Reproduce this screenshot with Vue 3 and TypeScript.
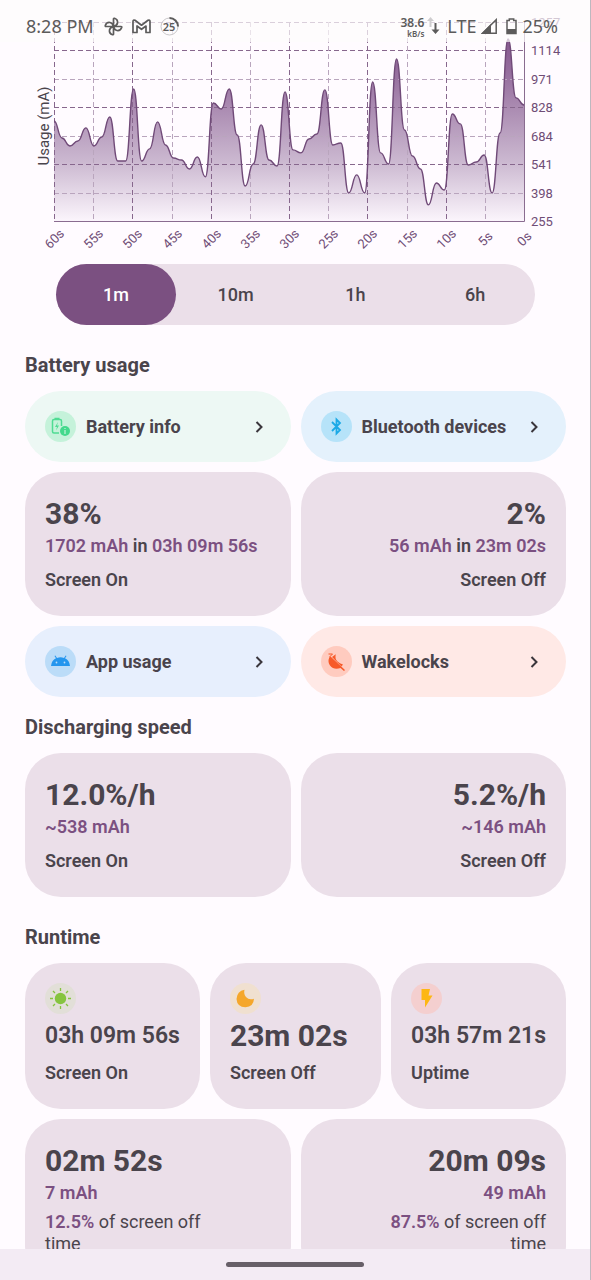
<script setup lang="ts">
import { ref } from 'vue'

const samples: number[] = [
  759, 673, 633, 658, 724, 633, 678, 779, 557, 557, 920, 557, 618, 754, 638,
  572, 562, 517, 577, 477, 849, 819, 920, 688, 431, 542, 739, 562, 532, 905,
  613, 598, 668, 693, 915, 638, 648, 396, 487, 396, 955, 598, 542, 1071, 713,
  582, 517, 336, 446, 411, 794, 744, 537, 552, 587, 396, 698, 1172, 875, 839,
]

const plot = { left: 54, right: 524, top: 22, bottom: 221 }
const minValue = 255
const maxValue = 1257

const xAt = (i: number, count: number) =>
  plot.left + ((plot.right - plot.left) * i) / (count - 1)
const yAt = (value: number) =>
  plot.bottom - ((value - minValue) / (maxValue - minValue)) * (plot.bottom - plot.top)

const points = samples.map((v, i) => ({ x: xAt(i, samples.length), y: yAt(v) }))

// Bezier with horizontal tangents at every sample.
const line = points.reduce((d, p, i) => {
  if (i === 0) return `M${p.x},${p.y}`
  const prev = points[i - 1]
  const mid = (prev.x + p.x) / 2
  return `${d} C${mid},${prev.y} ${mid},${p.y} ${p.x},${p.y}`
}, '')
const area = `${line} L${plot.right},${plot.bottom} L${plot.left},${plot.bottom} Z`

const yTicks = [1257, 1114, 971, 828, 684, 541, 398, 255].map((value) => ({
  value,
  y: Math.round(yAt(value)) + 0.5,
}))
const xTicks = Array.from({ length: 13 }, (_, i) => ({
  label: `${60 - i * 5}s`,
  x: Math.round(xAt(i, 13)) + 0.5,
}))

const ranges = ['1m', '10m', '1h', '6h']
const selected = ref('1m')
</script>

<template>
  <div class="screen">
    <header class="status">
      <span class="clock">8:28 PM</span>
      <svg class="s-icon pinwheel" width="19" height="19" viewBox="0 0 19 19">
        <path d="M9.500 9.500V2Q9.500 1 10.500 1.300Q14 2.500 13.500 6Q13 8.500 9.500 9.500H17Q18 9.500 17.700 10.500Q16.500 14 13 13.500Q10.500 13 9.500 9.500V17Q9.500 18 8.500 17.700Q5 16.500 5.500 13Q6 10.500 9.500 9.500H2Q1 9.500 1.300 8.500Q2.500 5 6 5.500Q8.500 6 9.500 9.500Z" />
      </svg>
      <svg class="s-icon mail" width="19" height="15" viewBox="0 0 19 15">
        <path d="M1 2.500Q1 0.500 3 1.300L9.500 6.200L16 1.300Q18 0.500 18 2.500V13.500H14V7L9.500 10.300L5 7V13.500H1Z" />
      </svg>
      <span class="ring">25
        <svg width="19" height="19" viewBox="0 0 19 19">
          <circle class="ring-track" cx="9.500" cy="9.500" r="8.500" />
          <path class="ring-value" d="M9.500 1A8.500 8.500 0 0 1 18 9.500" />
        </svg>
      </span>
      <span class="spring"></span>
      <span class="rate"><b>38.6</b><small>kB/s</small></span>
      <svg class="arrows" width="13" height="18" viewBox="0 0 13 18">
        <path class="up" d="M3.500 0L7 4H4.500V10H2.500V4H0Z" />
        <path class="down" d="M8.500 17L4.500 12.500H7.500V6H9.500V12.500H12.500Z" />
      </svg>
      <span class="lte">LTE</span>
      <svg class="signal" width="16" height="16" viewBox="0 0 16 16">
        <path class="solid" d="M0 16L10 6V16Z" />
        <path class="outline" d="M1.500 15.300L15.200 1.700V15.300Z" />
      </svg>
      <svg class="battery" width="11" height="17" viewBox="0 0 11 17">
        <path class="outline" d="M1 2.500H3.300V1H7.700V2.500H10V15.500H1Z" />
        <path class="solid" d="M1 11H10V16H1Z" />
      </svg>
      <span class="level">25%</span>
    </header>

    <main class="scroll">
      <svg class="chart" viewBox="0 0 590 256" role="img" aria-label="Usage (mA)">
        <defs>
          <linearGradient id="usage-fill" gradientUnits="userSpaceOnUse" x1="0" y1="22" x2="0" y2="221">
            <stop offset="0" stop-color="#7d4c85" />
            <stop offset="0.250" stop-color="#956d9d" />
            <stop offset="0.700" stop-color="#cbb8d0" />
            <stop offset="1" stop-color="#fbf5fc" />
          </linearGradient>
        </defs>
        <path :d="area" fill="url(#usage-fill)" />
        <g class="grid">
          <line
            v-for="(t, i) in yTicks" :key="t.value"
            :class="{ faint: i === 2 || i === 4 || i === 6 }"
            :x1="plot.left" :x2="plot.right" :y1="t.y" :y2="t.y"
          />
          <line
            v-for="(t, i) in xTicks" :key="t.label"
            :class="{ faint: i % 2 === 1 }"
            :x1="t.x" :x2="t.x" :y1="plot.top" :y2="plot.bottom"
          />
        </g>
        <path class="curve" :d="line" />
        <path class="axis" d="M54 221.500H524.500V22" />
        <text v-for="t in yTicks" :key="t.value" class="tick" x="531" :y="t.y + 4">{{ t.value }}</text>
        <text
          v-for="t in xTicks" :key="t.label" class="tick" text-anchor="middle"
          :transform="`translate(${t.x + 3} 242) rotate(-45)`"
        >{{ t.label }}</text>
        <text class="axis-title" text-anchor="middle" transform="translate(49 126) rotate(-90)">Usage (mA)</text>
      </svg>

      <div class="ranges">
        <button
          v-for="r in ranges" :key="r" type="button"
          :class="{ active: r === selected }" :aria-pressed="r === selected"
          @click="selected = r"
        >{{ r }}</button>
      </div>

      <h2>Battery usage</h2>
      <div class="pair">
        <button type="button" class="link mint">
          <svg class="badge" viewBox="0 0 31 31">
            <circle cx="15.500" cy="15.500" r="15.500" fill="#c5f2da" />
            <path d="M14 22H9Q7.500 22 7.500 20.500V10Q7.500 8.500 9 8.500H15Q16.500 8.500 16.500 10V15M9.500 7.500H14.500" fill="none" stroke="#4fdc93" stroke-width="1.500" />
            <path d="M13 11L10 16H12L11 19.500L14 14.500H12Z" fill="#4fdc93" />
            <circle cx="20" cy="20" r="5" fill="#43d98c" />
            <path d="M20 17V18M20 19V23" stroke="#c5f2da" stroke-width="1.200" />
          </svg>
          <span>Battery info</span>
          <svg class="chevron" viewBox="0 0 8 12"><path d="M1.500 1L6.500 6L1.500 11" /></svg>
        </button>
        <button type="button" class="link sky">
          <svg class="badge" viewBox="0 0 31 31">
            <circle cx="15.500" cy="15.500" r="15.500" fill="#b6e3f9" />
            <path d="M11 11L19 19L15.500 22.500V8.500L19 12L11 20" fill="none" stroke="#1ba9e6" stroke-width="1.800" />
          </svg>
          <span>Bluetooth devices</span>
          <svg class="chevron" viewBox="0 0 8 12"><path d="M1.500 1L6.500 6L1.500 11" /></svg>
        </button>
        <section class="card">
          <strong class="big">38%</strong>
          <p><em>1702 mAh</em> in <em>03h 09m 56s</em></p>
          <p class="label">Screen On</p>
        </section>
        <section class="card end">
          <strong class="big">2%</strong>
          <p><em>56 mAh</em> in <em>23m 02s</em></p>
          <p class="label">Screen Off</p>
        </section>
        <button type="button" class="link blue">
          <svg class="badge" viewBox="0 0 31 31">
            <circle cx="15.500" cy="15.500" r="15.500" fill="#bbdcf8" />
            <path d="M6 20Q6.500 14.500 11 12.300L9.500 10L10.300 9.500L12 11.900Q15.500 10.700 19 11.900L20.700 9.500L21.500 10L20 12.300Q24.500 14.500 25 20Z" fill="#2496ee" />
            <circle cx="11.500" cy="16.500" r="0.900" fill="#bbdcf8" />
            <circle cx="19.500" cy="16.500" r="0.900" fill="#bbdcf8" />
          </svg>
          <span>App usage</span>
          <svg class="chevron" viewBox="0 0 8 12"><path d="M1.500 1L6.500 6L1.500 11" /></svg>
        </button>
        <button type="button" class="link coral">
          <svg class="badge" viewBox="0 0 31 31">
            <circle cx="15.500" cy="15.500" r="15.500" fill="#ffcbbf" />
            <path d="M8.200 11.500Q6.500 16 9 19.500Q13 24.500 19.500 22L23 25L24 24L9.500 10.500Z" fill="#f75a29" />
            <path d="M11 11L14.800 8.200Q13.500 12.500 16.500 15.500Q18.500 17.500 22 18.500L20.500 20.500Z" fill="#f75a29" />
            <path d="M7.500 8H11.500L8.500 11" fill="none" stroke="#f75a29" stroke-width="1" />
          </svg>
          <span>Wakelocks</span>
          <svg class="chevron" viewBox="0 0 8 12"><path d="M1.500 1L6.500 6L1.500 11" /></svg>
        </button>
      </div>

      <h2 class="near">Discharging speed</h2>
      <div class="pair">
        <section class="card">
          <strong class="big">12.0%/h</strong>
          <p><em>~538 mAh</em></p>
          <p class="label">Screen On</p>
        </section>
        <section class="card end">
          <strong class="big">5.2%/h</strong>
          <p><em>~146 mAh</em></p>
          <p class="label">Screen Off</p>
        </section>
      </div>

      <h2>Runtime</h2>
      <div class="trio">
        <section class="card">
          <svg class="badge" viewBox="0 0 31 31">
            <circle cx="15.500" cy="15.500" r="15.500" fill="#e2dfd8" />
            <circle cx="15.500" cy="15.500" r="5.700" fill="#86c440" />
            <path d="M15.500 5V8M15.500 23V26M5 15.500H8M23 15.500H26M8 8L10 10M21 21L23 23M8 23L10 21M21 10L23 8" stroke="#86c440" stroke-width="1.300" />
          </svg>
          <strong class="big mid">03h 09m 56s</strong>
          <p class="label">Screen On</p>
        </section>
        <section class="card">
          <svg class="badge" viewBox="0 0 31 31">
            <circle cx="15.500" cy="15.500" r="15.500" fill="#f0e0d0" />
            <path d="M14.500 6.800Q13.500 11 16 14Q19 17.500 24 15.800Q23.500 24 15.500 24.300Q7 24 6.500 16Q7 8 14.500 6.800Z" fill="#f5a72b" />
          </svg>
          <strong class="big">23m 02s</strong>
          <p class="label">Screen Off</p>
        </section>
        <section class="card">
          <svg class="badge" viewBox="0 0 31 31">
            <circle cx="15.500" cy="15.500" r="15.500" fill="#f4cfcf" />
            <path d="M10.500 6H19L17.500 12.500H21.500L14 24.500V17H10.500Z" fill="#fdb713" />
          </svg>
          <strong class="big mid">03h 57m 21s</strong>
          <p class="label">Uptime</p>
        </section>
      </div>
      <div class="pair more">
        <section class="card">
          <strong class="big">02m 52s</strong>
          <p><em>7 mAh</em></p>
          <p class="share"><em>12.5%</em> of screen off time</p>
        </section>
        <section class="card end">
          <strong class="big">20m 09s</strong>
          <p><em>49 mAh</em></p>
          <p class="share"><em>87.5%</em> of screen off time</p>
        </section>
      </div>
    </main>

    <footer class="nav"><span class="handle"></span></footer>
  </div>
</template>

<style>
body {
  margin: 0;
  background: #fffbff;
}
</style>

<style scoped>
.screen {
  box-sizing: border-box;
  position: relative;
  display: flex;
  flex-direction: column;
  height: 100vh;
  border-right: 1px solid #bdb8bf;
  background: #fffbff;
  color: #4a444c;
  font-family: Roboto, "Liberation Sans", sans-serif;
}
.status {
  position: absolute;
  inset: 0 0 auto 0;
  z-index: 1;
  box-sizing: border-box;
  display: flex;
  align-items: center;
  height: 42px;
  padding: 10px 32px 0 26px;
  background: rgba(254, 252, 252, 0.7);
  color: #5c5b5b;
  font-family: "Noto Sans", sans-serif;
  font-size: 18px;
  line-height: 24px;
}
.clock {
  margin-right: 10px;
}
.s-icon {
  fill: none;
  stroke: #5c5b5b;
  stroke-width: 1.7;
  stroke-linejoin: round;
}
.mail {
  margin: 0 9px;
}
.ring {
  position: relative;
  width: 19px;
  font-size: 11px;
  font-weight: 600;
  line-height: 19px;
  text-align: center;
}
.ring svg {
  position: absolute;
  inset: 0;
  fill: none;
}
.ring-track {
  stroke: #c9c7c9;
}
.ring-value {
  stroke: #5c5b5b;
  stroke-width: 2;
}
.spring {
  flex: 1;
}
.rate {
  display: flex;
  flex-direction: column;
  align-items: flex-end;
  padding-top: 2px;
}
.rate b {
  font-size: 12px;
  font-weight: 600;
  line-height: 12px;
}
.rate small {
  font-size: 8px;
  font-weight: 600;
  line-height: 9px;
}
.arrows {
  margin: 0 7px 0 3px;
}
.up {
  fill: #cfcdcf;
}
.down,
.solid {
  fill: #5c5b5b;
}
.outline {
  fill: none;
  stroke: #5c5b5b;
  stroke-width: 1.5;
}
.signal {
  margin: 0 9px 0 5px;
}
.battery {
  margin-right: 5px;
}
.scroll {
  flex: 1;
  min-height: 0;
  overflow-y: auto;
  scrollbar-width: none;
  padding: 0 24px 0 25px;
}
.chart {
  display: block;
  width: calc(100% + 49px);
  margin: 0 -24px 0 -25px;
}
.grid line {
  stroke: #87678d;
  stroke-width: 1;
  stroke-dasharray: 5 3;
}
.grid .faint {
  stroke: #b9a5bd;
}
.curve {
  fill: none;
  stroke: #704a78;
  stroke-width: 1.4;
}
.axis {
  fill: none;
  stroke: #8a6c90;
}
.tick {
  fill: #6f4d76;
  font-size: 13px;
}
.axis-title {
  fill: #4a444c;
  font-size: 15px;
}
.ranges {
  display: flex;
  margin: 8px 31px 0;
  border-radius: 31px;
  background: #ebdfe9;
}
.ranges button {
  flex: 1;
  height: 61px;
  padding: 0;
  border: 0;
  border-radius: 31px;
  background: transparent;
  color: #4a444c;
  font: 500 18px/24px Roboto, "Liberation Sans", sans-serif;
}
.ranges .active {
  background: #7b5081;
  color: #fff;
}
h2 {
  margin: 28px 0 14px;
  font-size: 20px;
  font-weight: 700;
  line-height: 24px;
}
h2.near {
  margin-top: 18px;
}
.pair {
  display: grid;
  grid-template-columns: repeat(2, minmax(0, 1fr));
  gap: 10px;
}
.trio {
  display: grid;
  grid-template-columns: auto 1fr auto;
  gap: 10px;
}
.more {
  margin-top: 10px;
}
.link {
  display: flex;
  align-items: center;
  gap: 10px;
  height: 71px;
  padding: 0 28px 0 20px;
  border: 0;
  border-radius: 36px;
  color: #4a444c;
  font: 700 18px/24px Roboto, "Liberation Sans", sans-serif;
  text-align: left;
  white-space: nowrap;
}
.link span {
  flex: 1;
}
.mint {
  background: #edf8f4;
}
.sky {
  background: #e4f1fc;
}
.blue {
  background: #e7effd;
}
.coral {
  background: #ffe9e6;
}
.badge {
  flex: none;
  display: block;
  width: 31px;
  height: 31px;
}
.chevron {
  flex: none;
  width: 8px;
  height: 12px;
  fill: none;
  stroke: #3a363c;
  stroke-width: 2;
}
.card {
  padding: 20px 20px 26px;
  border-radius: 36px;
  background: #ebdfe9;
  font-size: 18px;
  font-weight: 600;
  line-height: 20px;
}
.card p {
  margin: 0;
}
.card em {
  color: #7b5081;
  font-style: normal;
  font-weight: 600;
}
.card .label {
  margin-top: 14px;
}
.trio .label {
  margin-top: 5px;
}
.big {
  display: block;
  font-size: 30px;
  font-weight: 700;
  line-height: 44px;
  white-space: nowrap;
}
.mid {
  font-size: 23px;
  font-weight: 600;
}
.end {
  text-align: right;
}
.card .share {
  max-width: 176px;
  margin-top: 8px;
  font-weight: 400;
  line-height: 22px;
}
.end .share {
  margin-left: auto;
}
.nav {
  display: flex;
  align-items: center;
  justify-content: center;
  height: 31px;
  background: #f3ebf4;
}
.handle {
  width: 138px;
  height: 5px;
  border-radius: 3px;
  background: #675f68;
}
</style>
